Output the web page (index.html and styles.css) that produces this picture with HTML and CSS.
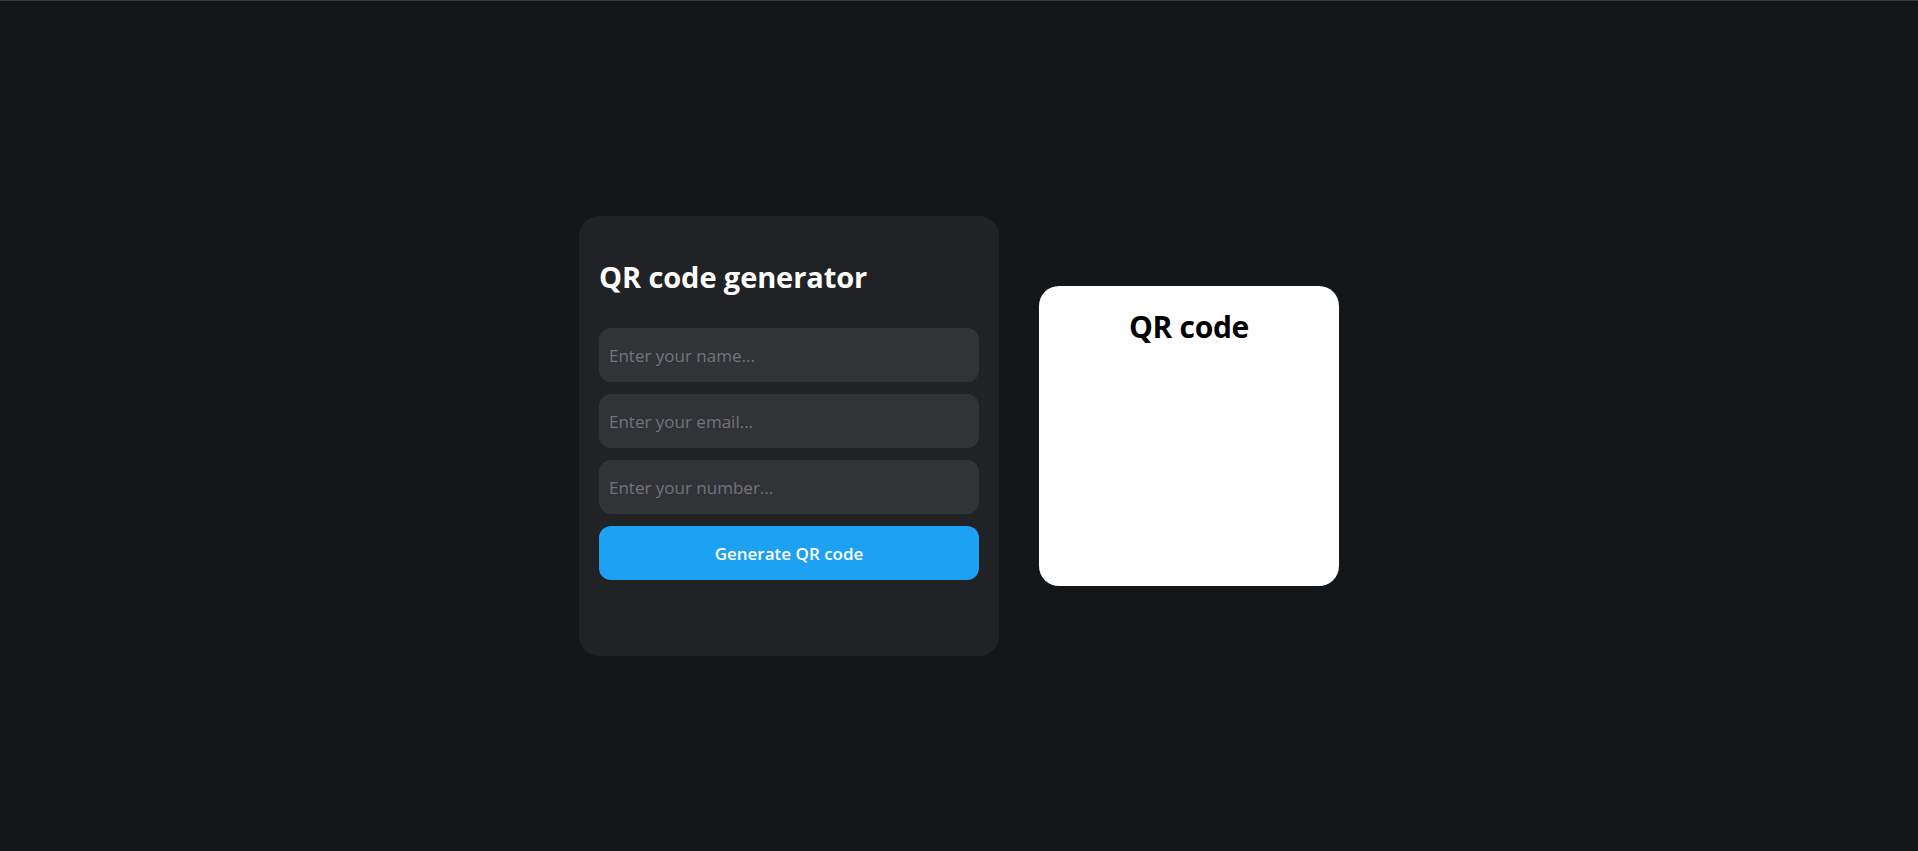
FILE: index.html
```html
<!DOCTYPE html>
<html lang="en">
<head>
<meta charset="utf-8">
<title>QR code generator</title>
<link rel="stylesheet" href="styles.css">
</head>
<body>
<main class="page">
  <section class="form-card">
    <h2 class="form-title">QR code generator</h2>
    <form class="form">
      <input class="field" type="text" placeholder="Enter your name...">
      <input class="field" type="email" placeholder="Enter your email...">
      <input class="field" type="text" placeholder="Enter your number...">
      <button class="generate" type="button">Generate QR code</button>
    </form>
  </section>
  <section class="qr-card">
    <h1 class="qr-title">QR code</h1>
  </section>
</main>
</body>
</html>
```

FILE: styles.css
```css
* { box-sizing: border-box; }
html, body { height: 100%; }
body {
  margin: 0;
  background: #141719;
  border-top: 1px solid #393b3e;
  font-family: "Open Sans", "Noto Sans", sans-serif;
}
.page {
  min-height: 100%;
  padding-top: 20px;
  display: flex;
  justify-content: center;
  align-items: center;
  gap: 40px;
}
.form-card {
  width: 420px;
  height: 440px;
  padding: 20px;
  background: #202226;
  border-radius: 20px;
}
.form-title {
  margin: 22px 0 32px;
  font-size: 29px;
  line-height: 38px;
  font-weight: 700;
  color: #ffffff;
  letter-spacing: -0.1px;
}
.form {
  display: flex;
  flex-direction: column;
  gap: 12px;
}
.field {
  height: 54px;
  width: 100%;
  border: none;
  outline: none;
  border-radius: 12px;
  background: #323337;
  padding: 0 10px;
  font-family: inherit;
  font-size: 17px;
  color: #ffffff;
}
.field::placeholder { color: #73747a; }
.generate {
  height: 54px;
  width: 100%;
  border: none;
  border-radius: 12px;
  background: #1da1f2;
  color: #ffffff;
  font-family: inherit;
  font-size: 17px;
  font-weight: 600;
  cursor: pointer;
}
.qr-card {
  width: 300px;
  height: 300px;
  background: #ffffff;
  border-radius: 20px;
  padding-top: 20px;
}
.qr-title {
  margin: 0;
  text-align: center;
  font-size: 30px;
  line-height: 42px;
  font-weight: 700;
  color: #000000;
  letter-spacing: -0.3px;
}
```
